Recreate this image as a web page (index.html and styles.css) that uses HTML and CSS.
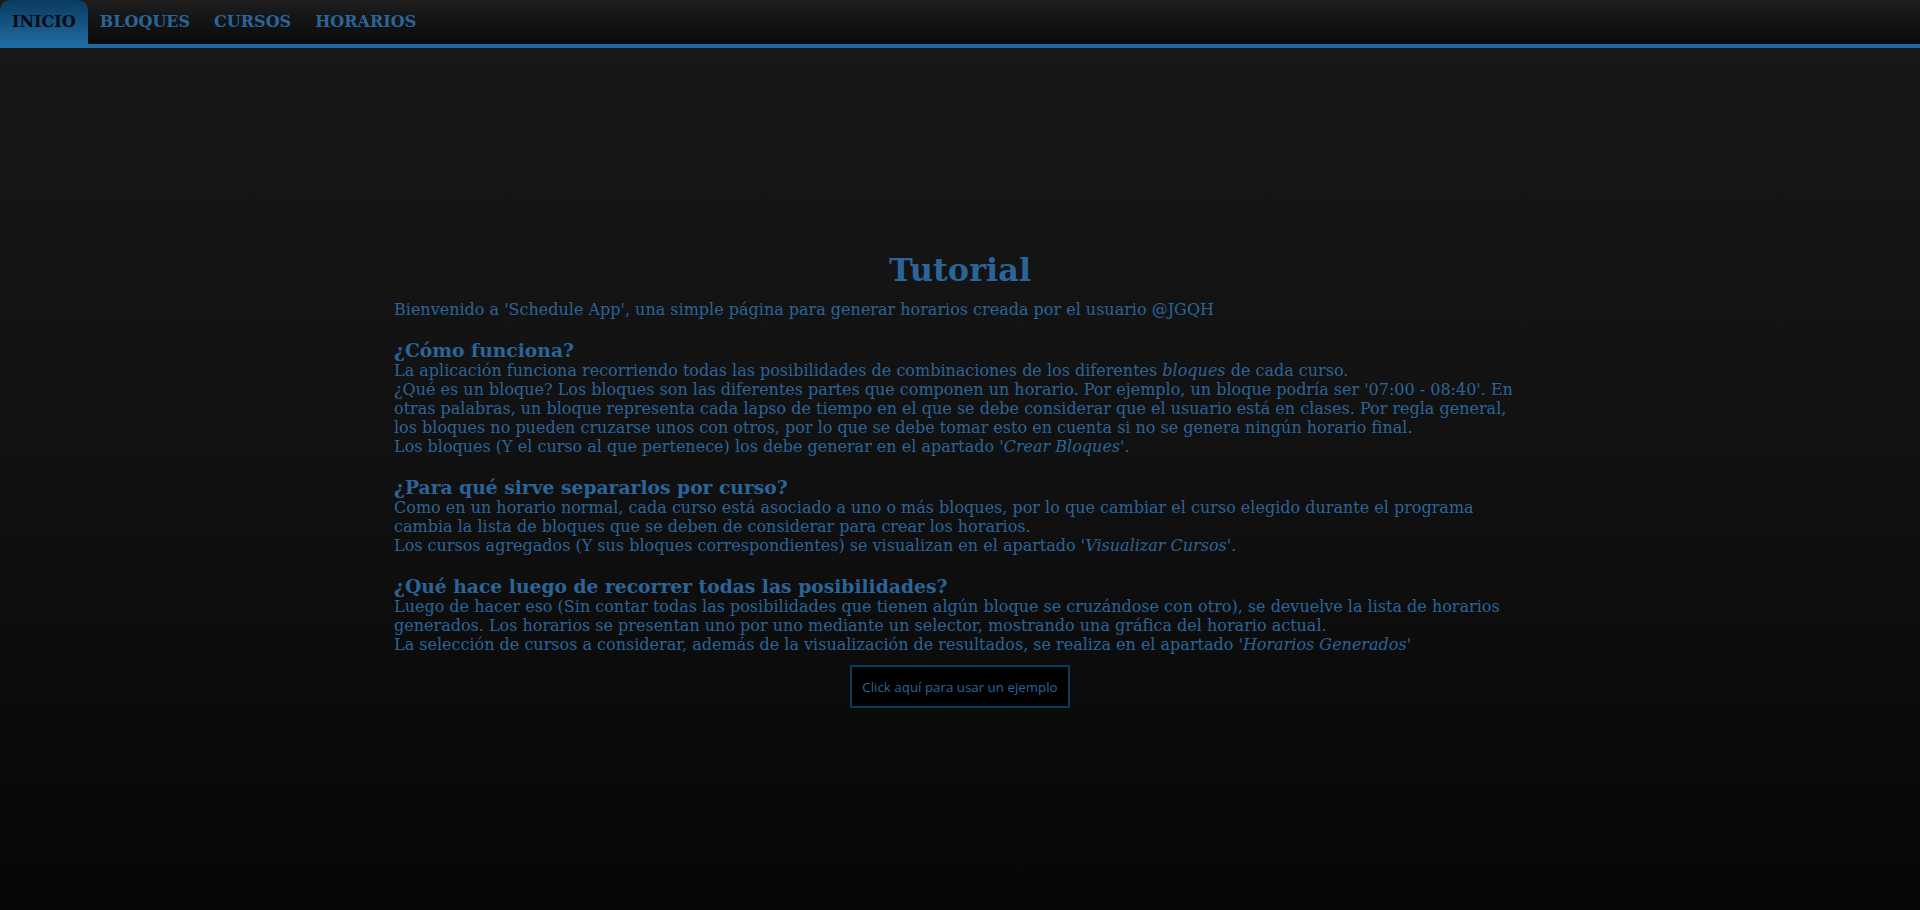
FILE: index.html
```html
<!DOCTYPE html>
<html lang="es">
<head>
<meta charset="utf-8">
<title>Schedule App</title>
<link rel="stylesheet" href="styles.css">
</head>
<body>
<nav class="nav">
  <a class="tab active">INICIO</a>
  <a class="tab">BLOQUES</a>
  <a class="tab">CURSOS</a>
  <a class="tab">HORARIOS</a>
</nav>
<main class="main">
  <section class="tutorial">
    <h1 class="title">Tutorial</h1>
    <p class="para">Bienvenido a 'Schedule App', una simple página para generar horarios creada por el usuario @JGQH</p>
    <h3 class="heading">¿Cómo funciona?</h3>
    <p class="para">La aplicación funciona recorriendo todas las posibilidades de combinaciones de los diferentes <em>bloques</em> de cada curso.<br>¿Qué es un bloque? Los bloques son las diferentes partes que componen un horario. Por ejemplo, un bloque podría ser '07:00 - 08:40'. En otras palabras, un bloque representa cada lapso de tiempo en el que se debe considerar que el usuario está en clases. Por regla general, los bloques no pueden cruzarse unos con otros, por lo que se debe tomar esto en cuenta si no se genera ningún horario final.<br>Los bloques (Y el curso al que pertenece) los debe generar en el apartado '<em>Crear Bloques</em>'.</p>
    <h3 class="heading">¿Para qué sirve separarlos por curso?</h3>
    <p class="para">Como en un horario normal, cada curso está asociado a uno o más bloques, por lo que cambiar el curso elegido durante el programa cambia la lista de bloques que se deben de considerar para crear los horarios.<br>Los cursos agregados (Y sus bloques correspondientes) se visualizan en el apartado '<em>Visualizar Cursos</em>'.</p>
    <h3 class="heading">¿Qué hace luego de recorrer todas las posibilidades?</h3>
    <p class="para last">Luego de hacer eso (Sin contar todas las posibilidades que tienen algún bloque se cruzándose con otro), se devuelve la lista de horarios generados. Los horarios se presentan uno por uno mediante un selector, mostrando una gráfica del horario actual.<br>La selección de cursos a considerar, además de la visualización de resultados, se realiza en el apartado '<em>Horarios Generados</em>'</p>
    <div class="actions">
      <button class="example-btn">Click aquí para usar un ejemplo</button>
    </div>
  </section>
</main>
</body>
</html>
```
FILE: styles.css
```css
html, body {
  margin: 0;
  padding: 0;
  height: 100%;
}
body {
  background: linear-gradient(to bottom, #181818 0%, #111111 50%, #060606 100%);
  font-family: "DejaVu Serif", serif;
  color: #2a6599;
  display: flex;
  flex-direction: column;
}
.nav {
  display: flex;
  height: 44px;
  border-bottom: 4px solid #1f6ba3;
  background: linear-gradient(to bottom, #1d1d1d, #0a0a0a);
  flex-shrink: 0;
}
.tab {
  display: flex;
  align-items: center;
  padding: 0 12px 1px;
  font-weight: bold;
  font-size: 16px;
  color: #2a6599;
  cursor: pointer;
}
.tab.active {
  color: #050a10;
  border-radius: 10px 10px 0 0;
  background: linear-gradient(to bottom, #0a3a5e, #1f6aa0);
}
.main {
  flex: 1;
  display: flex;
  align-items: center;
  justify-content: center;
  padding-top: 2px;
}
.tutorial {
  width: 1132px;
}
.title {
  text-align: center;
  font-size: 32px;
  margin: 0 0 11px;
  line-height: 37px;
}
.para {
  margin: 0 0 20px;
  font-size: 16px;
  line-height: 19px;
}
.para.last {
  margin-bottom: 11px;
}
.heading {
  margin: 0;
  font-size: 18.72px;
  line-height: 22px;
}
.actions {
  display: flex;
  justify-content: center;
}
.example-btn {
  width: 220px;
  height: 43px;
  background: #000;
  border: 2px solid #0b3a5b;
  color: #2a6599;
  font-family: "Open Sans", "Noto Sans", sans-serif;
  font-size: 13.33px;
  cursor: pointer;
}
```
